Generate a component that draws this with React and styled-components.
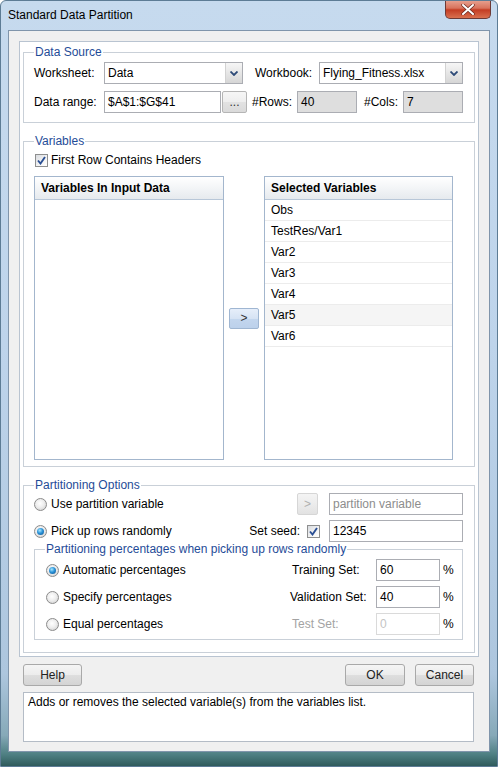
import React from "react";
import styled, { createGlobalStyle } from "styled-components";

const GlobalStyle = createGlobalStyle`
  html, body { margin: 0; padding: 0; background: #fff; }
  body {
    font-family: "Liberation Sans", Arial, sans-serif;
    font-size: 12px;
    color: #000;
  }
  * { box-sizing: border-box; }
`;

const Window = styled.div`
  width: 498px;
  height: 767px;
  display: flex;
  flex-direction: column;
  border: 1px solid #5d7c95;
  border-radius: 6px 6px 0 0;
  overflow: hidden;
  background: linear-gradient(
    180deg,
    #c6daee 0%,
    #bed4eb 45%,
    #adc6de 88%,
    #86a9b8 96%,
    #4e7f82 98.5%,
    #2f5b5c 100%
  );
`;

const TitleBar = styled.div`
  height: 29px;
  display: flex;
  align-items: flex-start;
`;

const TitleText = styled.div`
  padding: 7px 0 0 7px;
  line-height: 14px;
  font-size: 12px;
  color: #000;
`;

const CloseButton = styled.div`
  margin-left: auto;
  margin-right: 6px;
  margin-top: -1px;
  width: 46px;
  height: 19px;
  border: 1px solid #6d3a36;
  border-top: none;
  border-radius: 0 0 5px 5px;
  background: linear-gradient(180deg, #e8a493 0%, #d8735d 45%, #c43d23 55%, #d9704f 100%);
  display: flex;
  align-items: center;
  justify-content: center;
`;

const Client = styled.div`
  margin: 0 7px;
  height: 722px;
  background: #f0f0f0;
  border: 1px solid #8095ab;
  padding: 10px 10px 0 10px;
  display: flex;
  flex-direction: column;
`;

const Panel = styled.div`
  background: #fff;
  border: 1px solid #b9c4d1;
  padding: 3px;
  display: flex;
  flex-direction: column;
  gap: 11px;
`;

const Group = styled.fieldset`
  margin: 0;
  min-width: 0;
  border: 1px solid #c9d0d8;
  padding: ${(p) => p.$pad || "3px 11px 9px 10px"};
`;

const Legend = styled.legend`
  padding: 0 1px;
  font-size: 12px;
  line-height: 14px;
  color: #1f4c98;
`;

const Stack = styled.div`
  display: flex;
  flex-direction: column;
  gap: ${(p) => p.$gap || 6}px;
`;

const Row = styled.div`
  display: flex;
  align-items: center;
  height: 22px;
`;

const Label = styled.span`
  width: ${(p) => (p.$w ? `${p.$w}px` : "auto")};
  margin-left: ${(p) => p.$ml || 0}px;
  flex-shrink: 0;
  white-space: nowrap;
  color: ${(p) => (p.$disabled ? "#a3a3a3" : "#000")};
`;

const Select = styled.div`
  width: ${(p) => p.$w}px;
  height: 22px;
  border: 1px solid #abadb3;
  background: #fff;
  display: flex;
  align-items: stretch;
`;

const SelectText = styled.span`
  flex: 1;
  padding-left: 3px;
  display: flex;
  align-items: center;
`;

const SelectArrow = styled.span`
  width: 17px;
  border-left: 1px solid #d2d2d2;
  background: linear-gradient(180deg, #f6f6f6 0%, #e6e6e6 50%, #d6d6d6 100%);
  display: flex;
  align-items: center;
  justify-content: center;
`;

const Input = styled.div`
  width: ${(p) => p.$w}px;
  height: 22px;
  margin-left: ${(p) => p.$ml || 0}px;
  flex-shrink: 0;
  border: 1px solid ${(p) => (p.$disabled ? "#dadada" : "#abadb3")};
  background: ${(p) => (p.$readonly ? "#dedede" : "#fff")};
  color: ${(p) => (p.$disabled ? "#c4c4c4" : p.$placeholder ? "#8d8d8d" : "#000")};
  padding-left: 3px;
  display: flex;
  align-items: center;
  white-space: nowrap;
`;

const SmallButton = styled.div`
  width: ${(p) => p.$w}px;
  height: 22px;
  margin-left: ${(p) => p.$ml || 0}px;
  flex-shrink: 0;
  border: 1px solid ${(p) => (p.$disabled ? "#d6d6d6" : "#b5b5b5")};
  border-radius: 2px;
  background: ${(p) =>
    p.$disabled
      ? "linear-gradient(180deg, #f4f4f4 0%, #ececec 50%, #e2e2e2 100%)"
      : "linear-gradient(180deg, #f6f6f6 0%, #eeeeee 50%, #e2e2e2 51%, #dadada 100%)"};
  color: ${(p) => (p.$disabled ? "#b0b0b0" : "#333")};
  display: flex;
  align-items: center;
  justify-content: center;
`;

const CheckRow = styled.div`
  display: flex;
  align-items: center;
  height: 16px;
  margin-bottom: 8px;
`;

const Box = styled.span`
  width: 13px;
  height: 13px;
  margin-left: ${(p) => p.$ml || 0}px;
  margin-right: ${(p) => p.$mr || 0}px;
  flex-shrink: 0;
  border: 1px solid #8e8f8f;
  background: linear-gradient(135deg, #d9dce0 0%, #f4f4f4 60%, #ffffff 100%);
  display: flex;
  align-items: center;
  justify-content: center;
`;

const Radio = styled.span`
  width: 13px;
  height: 13px;
  margin-left: ${(p) => p.$ml || 0}px;
  margin-right: 4px;
  flex-shrink: 0;
  border-radius: 50%;
  border: 1px solid #8b8b8b;
  background: radial-gradient(circle at 45% 40%, #ffffff 0%, #eeeeee 45%, #c9c9c9 100%);
  display: flex;
  align-items: center;
  justify-content: center;
  &::after {
    content: "";
    display: ${(p) => (p.$checked ? "block" : "none")};
    width: 7px;
    height: 7px;
    border-radius: 50%;
    background: radial-gradient(circle at 40% 35%, #a9e8ff 0%, #2b93d9 45%, #0b4f8a 100%);
  }
`;

const Lists = styled.div`
  display: flex;
  align-items: center;
  gap: 5px;
  height: 284px;
`;

const ListBox = styled.div`
  width: ${(p) => p.$w}px;
  height: 100%;
  border: 1px solid #a3b6cd;
  background: #fff;
  display: flex;
  flex-direction: column;
`;

const ListHeader = styled.div`
  height: 23px;
  flex-shrink: 0;
  border-bottom: 1px solid #b8c7d8;
  background: linear-gradient(180deg, #ffffff 0%, #f3f5f7 50%, #e6eaee 100%);
  font-weight: bold;
  padding-left: 6px;
  display: flex;
  align-items: center;
`;

const ListItem = styled.div`
  height: 21px;
  flex-shrink: 0;
  border-bottom: 1px solid #ececec;
  background: ${(p) => (p.$shade ? "#f5f5f5" : "#fff")};
  padding-left: 6px;
  display: flex;
  align-items: center;
`;

const ArrowButton = styled.div`
  width: 30px;
  height: 21px;
  flex-shrink: 0;
  border: 1px solid #9fb6d2;
  border-radius: 2px;
  background: linear-gradient(180deg, #e6eefa 0%, #d6e3f4 50%, #c3d6ee 51%, #bcd1eb 100%);
  color: #333;
  display: flex;
  align-items: center;
  justify-content: center;
`;

const Spacer = styled.span`
  flex: 1;
`;

const Percent = styled.span`
  width: 16px;
  padding-left: 3px;
  flex-shrink: 0;
`;

const ButtonRow = styled.div`
  margin: 7px 5px 0 4px;
  display: flex;
  align-items: center;
  gap: 10px;
`;

const DialogButton = styled.div`
  width: ${(p) => p.$w}px;
  height: 22px;
  margin-left: ${(p) => (p.$push ? "auto" : "0")};
  border: 1px solid #a9a9a9;
  border-radius: 3px;
  background: linear-gradient(180deg, #f5f5f5 0%, #ececec 50%, #dedede 51%, #d4d4d4 100%);
  color: #222;
  display: flex;
  align-items: center;
  justify-content: center;
`;

const Description = styled.div`
  margin: 6px 5px 0 4px;
  height: 50px;
  border: 1px solid #b4bcc6;
  background: #fff;
  padding: 2px 4px;
  line-height: 14px;
`;

const Chevron = () => (
  <svg width="8" height="5" viewBox="0 0 8 5">
    <path d="M0.5 0.5 L4 4 L7.5 0.5" fill="none" stroke="#2d4a78" strokeWidth="1.8" />
  </svg>
);

const Check = () => (
  <svg width="9" height="9" viewBox="0 0 9 9">
    <path d="M1 4.5 L3.5 7.5 L8 1" fill="none" stroke="#2a4f94" strokeWidth="1.9" />
  </svg>
);

const CloseX = () => (
  <svg width="14" height="11" viewBox="0 0 14 11">
    <path d="M2 1 L12 10 M12 1 L2 10" stroke="#6b2a20" strokeWidth="3.4" strokeLinecap="round" />
    <path d="M2 1 L12 10 M12 1 L2 10" stroke="#ffffff" strokeWidth="2" strokeLinecap="round" />
  </svg>
);

const selected = ["Obs", "TestRes/Var1", "Var2", "Var3", "Var4", "Var5", "Var6"];

const App = () => {
  return (
    <>
      <GlobalStyle />
      <Window>
        <TitleBar>
          <TitleText>Standard Data Partition</TitleText>
          <CloseButton>
            <CloseX />
          </CloseButton>
        </TitleBar>
        <Client>
          <Panel>
            <Group>
              <Legend>Data Source</Legend>
              <Stack $gap={7}>
                <Row>
                  <Label $w={70}>Worksheet:</Label>
                  <Select $w={139}>
                    <SelectText>Data</SelectText>
                    <SelectArrow>
                      <Chevron />
                    </SelectArrow>
                  </Select>
                  <Label $w={64} $ml={12}>Workbook:</Label>
                  <Select $w={144}>
                    <SelectText>Flying_Fitness.xlsx</SelectText>
                    <SelectArrow>
                      <Chevron />
                    </SelectArrow>
                  </Select>
                </Row>
                <Row>
                  <Label $w={70}>Data range:</Label>
                  <Input $w={117}>$A$1:$G$41</Input>
                  <SmallButton $w={25} $ml={1}>...</SmallButton>
                  <Label $w={45} $ml={5}>#Rows:</Label>
                  <Input $w={60} $readonly>40</Input>
                  <Label $w={39} $ml={7}>#Cols:</Label>
                  <Input $w={60} $readonly>7</Input>
                </Row>
              </Stack>
            </Group>

            <Group $pad="4px 11px 6px 10px">
              <Legend>Variables</Legend>
              <CheckRow>
                <Box $ml={1} $mr={3}>
                  <Check />
                </Box>
                <Label>First Row Contains Headers</Label>
              </CheckRow>
              <Lists>
                <ListBox $w={190}>
                  <ListHeader>Variables In Input Data</ListHeader>
                </ListBox>
                <ArrowButton>&gt;</ArrowButton>
                <ListBox $w={189}>
                  <ListHeader>Selected Variables</ListHeader>
                  {selected.map((name) => (
                    <ListItem key={name} $shade={name === "Var5"}>
                      {name}
                    </ListItem>
                  ))}
                </ListBox>
              </Lists>
            </Group>

            <Group $pad="1px 11px 12px 10px">
              <Legend>Partitioning Options</Legend>
              <Stack $gap={5}>
                <Row>
                  <Radio />
                  <Label>Use partition variable</Label>
                  <Spacer />
                  <SmallButton $w={21} $disabled>&gt;</SmallButton>
                  <Input $w={134} $ml={11} $placeholder>partition variable</Input>
                </Row>
                <Row>
                  <Radio $checked />
                  <Label>Pick up rows randomly</Label>
                  <Spacer />
                  <Label>Set seed:</Label>
                  <Box $ml={7} $mr={9}>
                    <Check />
                  </Box>
                  <Input $w={134}>12345</Input>
                </Row>
              </Stack>
              <Group $pad="3px 6px 4px 10px">
                <Legend>Partitioning percentages when picking up rows randomly</Legend>
                <Stack $gap={5}>
                  <Row>
                    <Radio $checked $ml={1} />
                    <Label>Automatic percentages</Label>
                    <Spacer />
                    <Label $w={84}>Training Set:</Label>
                    <Input $w={64}>60</Input>
                    <Percent>%</Percent>
                  </Row>
                  <Row>
                    <Radio $ml={1} />
                    <Label>Specify percentages</Label>
                    <Spacer />
                    <Label $w={86}>Validation Set:</Label>
                    <Input $w={64}>40</Input>
                    <Percent>%</Percent>
                  </Row>
                  <Row>
                    <Radio $ml={1} />
                    <Label>Equal percentages</Label>
                    <Spacer />
                    <Label $w={84} $disabled>Test Set:</Label>
                    <Input $w={64} $disabled>0</Input>
                    <Percent>%</Percent>
                  </Row>
                </Stack>
              </Group>
            </Group>
          </Panel>

          <ButtonRow>
            <DialogButton $w={59}>Help</DialogButton>
            <DialogButton $w={60} $push>OK</DialogButton>
            <DialogButton $w={59}>Cancel</DialogButton>
          </ButtonRow>
          <Description>
            Adds or removes the selected variable(s) from the variables list.
          </Description>
        </Client>
      </Window>
    </>
  );
};

export default App;
